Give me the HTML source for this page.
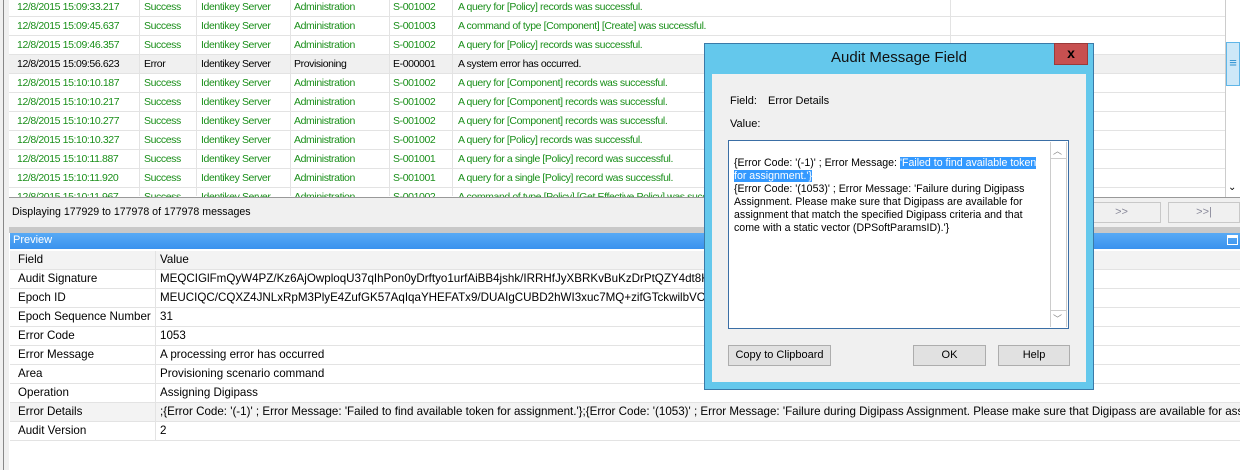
<!DOCTYPE html>
<html><head><meta charset="utf-8"><style>
*{margin:0;padding:0;box-sizing:border-box}
body{width:1240px;height:470px;overflow:hidden;background:#fff;font-family:"Liberation Sans",sans-serif;font-size:11px;position:relative}
.abs{position:absolute}
.row{position:absolute;left:9px;width:1216px;height:19px;border-bottom:1px solid #e3e3e3;color:#1a8f1a;white-space:nowrap;font-size:10.5px;letter-spacing:-0.4px}
.row span{position:absolute;top:3px}
.row.err{background:#f0f0f0;color:#000}
.vl{position:absolute;top:0;width:1px;height:196px;background:#e3e3e3}
.prow{position:absolute;left:10px;width:1230px;height:19px;border-bottom:1px solid #e3e3e3;white-space:nowrap;overflow:hidden;font-size:11.6px}
.prow span{position:absolute;top:2px}
.btn{position:absolute;background:#e1e1e1;border:1px solid #adadad;text-align:center;line-height:19px;font-size:11px}
</style></head><body>
<div class="abs" style="left:0;top:0;width:3px;height:470px;background:#f0f0f0"></div>
<div class="abs" style="left:3px;top:0;width:1px;height:470px;background:#888"></div>
<div class="abs" style="left:4px;top:0;width:5px;height:470px;background:#f0f0f0"></div>
<div id="grid"></div>
<div class="vl" style="left:139px"></div><div class="vl" style="left:196px"></div><div class="vl" style="left:290px"></div><div class="vl" style="left:389px"></div><div class="vl" style="left:452px"></div><div class="vl" style="left:950px"></div>
<script>
var d=[["12/8/2015 15:09:33.217","Success","S-001002","A query for [Policy] records was successful."],
["12/8/2015 15:09:45.637","Success","S-001003","A command of type [Component] [Create] was successful."],
["12/8/2015 15:09:46.357","Success","S-001002","A query for [Policy] records was successful."],
["12/8/2015 15:09:56.623","Error","E-000001","A system error has occurred."],
["12/8/2015 15:10:10.187","Success","S-001002","A query for [Component] records was successful."],
["12/8/2015 15:10:10.217","Success","S-001002","A query for [Component] records was successful."],
["12/8/2015 15:10:10.277","Success","S-001002","A query for [Component] records was successful."],
["12/8/2015 15:10:10.327","Success","S-001002","A query for [Policy] records was successful."],
["12/8/2015 15:10:11.887","Success","S-001001","A query for a single [Policy] record was successful."],
["12/8/2015 15:10:11.920","Success","S-001001","A query for a single [Policy] record was successful."],
["12/8/2015 15:10:11.967","Success","S-001002","A command of type [Policy] [Get Effective Policy] was successful."]];
var h="";
for(var i=0;i<d.length;i++){var r=d[i];var e=r[1]=="Error";
h+='<div class="row'+(e?' err':'')+'" style="top:'+(-2+19*i)+'px"><span style="left:8px">'+r[0]+'</span><span style="left:135px">'+r[1]+'</span><span style="left:192px">Identikey Server</span><span style="left:285px">'+(e?'Provisioning':'Administration')+'</span><span style="left:384px">'+r[2]+'</span><span style="left:449px">'+r[3]+'</span></div>';}
document.getElementById('grid').innerHTML=h;
</script>
<div class="abs" style="left:1225px;top:0;width:15px;height:197px;background:#fff;border-left:1px solid #ccc"></div>
<div class="abs" style="left:1226px;top:42px;width:14px;height:44px;background:#cde8f8;border:1px solid #5fb6e8;color:#2a8fd0;font-size:13px;font-weight:bold;text-align:center;line-height:40px">≡</div>
<div class="abs" style="left:1228px;top:182px;font-size:10px">⌄</div>
<div class="abs" style="left:9px;top:197px;width:1231px;height:30px;background:#f0f0f0;border-top:1px solid #999"></div>
<div class="abs" style="left:12px;top:206px;font-size:10.6px">Displaying 177929 to 177978 of 177978 messages</div>
<div class="abs" style="left:1082px;top:202px;width:79px;height:21px;border:1px solid #c8c8c8;background:#f0f0f0;color:#889;text-align:center;line-height:19px">&gt;&gt;</div>
<div class="abs" style="left:1168px;top:202px;width:72px;height:21px;border:1px solid #c8c8c8;background:#f0f0f0;color:#889;text-align:center;line-height:19px">&gt;&gt;|</div>
<div class="abs" style="left:9px;top:227px;width:1231px;height:6px;background:#c8c8c8"></div>
<div class="abs" style="left:10px;top:233px;width:1230px;height:16px;background:linear-gradient(#58aaf5,#3a92ee);color:#fff;padding-left:3px;line-height:15px;font-size:11px">Preview</div>
<div class="abs" style="left:1227px;top:235px;width:11px;height:10px;border:1px solid #fff;border-top-width:3px"></div>
<div id="pv"></div>
<script>
var p=[["Field","Value"],["Audit Signature","MEQCIGlFmQyW4PZ/Kz6AjOwploqU37qIhPon0yDrftyo1urfAiBB4jshk/IRRHfJyXBRKvBuKzDrPtQZY4dt8Kr"],["Epoch ID","MEUCIQC/CQXZ4JNLxRpM3PlyE4ZufGK57AqIqaYHEFATx9/DUAIgCUBD2hWI3xuc7MQ+zifGTckwilbVON"],["Epoch Sequence Number","31"],["Error Code","1053"],["Error Message","A processing error has occurred"],["Area","Provisioning scenario command"],["Operation","Assigning Digipass"],["Error Details",";{Error Code: '(-1)' ; Error Message: 'Failed to find available token for assignment.'};{Error Code: '(1053)' ; Error Message: 'Failure during Digipass Assignment. Please make sure that Digipass are available for assignment"],["Audit Version","2"]];
var h="";
for(var i=0;i<p.length;i++){h+='<div class="prow" style="top:'+(251+19*i)+'px;'+(i==0||i==8?'background:#f3f3f3;':'')+'"><span style="left:8px">'+p[i][0]+'</span><span style="left:150px">'+p[i][1]+'</span></div>';}
h+='<div class="abs" style="left:155px;top:251px;width:1px;height:190px;background:#e3e3e3"></div>';
document.getElementById('pv').innerHTML=h;
</script>
<!-- dialog -->
<div class="abs" style="left:704px;top:43px;width:390px;height:347px;background:#64c8ec;border:1px solid #3a7aa8"></div>
<div class="abs" style="left:704px;top:49px;width:390px;text-align:center;font-size:15px;color:#111">Audit Message Field</div>
<div class="abs" style="left:1054px;top:43px;width:34px;height:22px;background:#c75050;border:1px solid #9a3a3a;color:#000;font-weight:bold;text-align:center;line-height:19px;font-size:14px">x</div>
<div class="abs" style="left:712px;top:74px;width:374px;height:308px;background:#f0f0f0"></div>
<div class="abs" style="left:730px;top:95px">Field:</div>
<div class="abs" style="left:768px;top:95px">Error Details</div>
<div class="abs" style="left:730px;top:118px">Value:</div>
<div class="abs" style="left:728px;top:140px;width:341px;height:189px;background:#fff;border:1px solid #3a6ea5"></div>
<div class="abs" style="left:1050px;top:142px;width:17px;height:185px;border-left:1px solid #ccc;border-right:1px solid #ccc;background:#fff"></div>
<div class="abs" style="left:1051px;top:158px;width:15px;height:1px;background:#ccc"></div>
<div class="abs" style="left:1051px;top:310px;width:15px;height:1px;background:#ccc"></div>
<div class="abs" style="left:1053px;top:144px;color:#888;font-size:9px">︿</div>
<div class="abs" style="left:1053px;top:312px;color:#888;font-size:9px">﹀</div>
<div class="abs" style="left:734px;top:157px;width:314px;line-height:13px;font-size:10.6px;color:#000">{Error Code: '(-1)' ; Error Message: <span style="background:#3399ff;color:#fff">'Failed to find available token for assignment.'}</span><br>{Error Code: '(1053)' ; Error Message: 'Failure during Digipass Assignment. Please make sure that Digipass are available for assignment that match the specified Digipass criteria and that come with a static vector (DPSoftParamsID).'}</div>
<div class="btn" style="left:728px;top:345px;width:103px;height:21px">Copy to Clipboard</div>
<div class="btn" style="left:913px;top:345px;width:73px;height:21px">OK</div>
<div class="btn" style="left:998px;top:345px;width:72px;height:21px">Help</div>
</body></html>
